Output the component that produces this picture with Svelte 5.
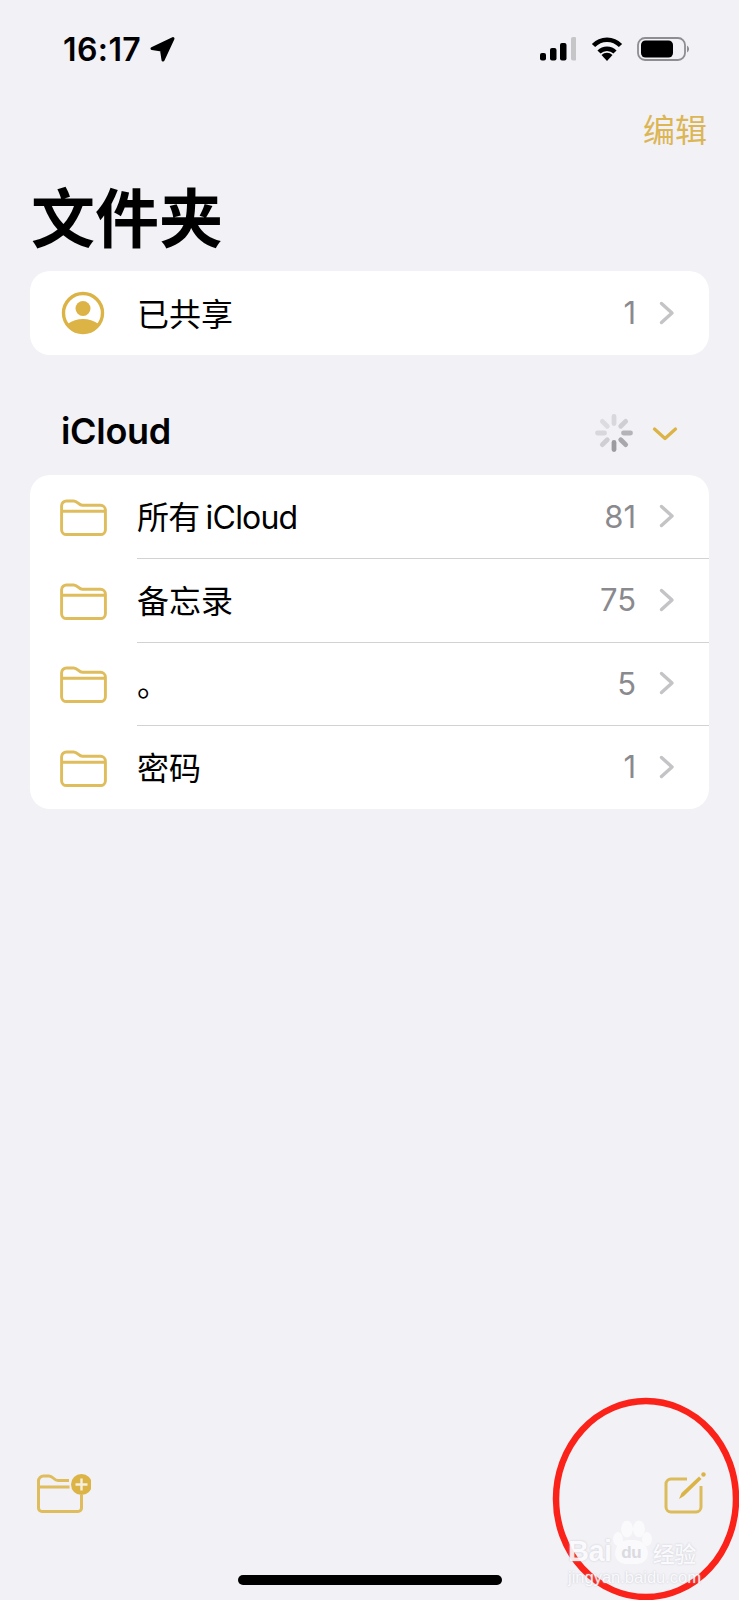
<script lang="ts">
  const folders = [
    { name: '所有 iCloud', count: 81 },
    { name: '备忘录', count: 75 },
    { name: '。', count: 5 },
    { name: '密码', count: 1 }
  ];
  // spinner spokes, clockwise from 12 o'clock
  const spokes = [
    { a: 0, o: '#d8d8dc' },
    { a: 45, o: '#cfcfd3' },
    { a: 90, o: '#b4b4b8' },
    { a: 135, o: '#a8a8ac' },
    { a: 180, o: '#9c9ca0' },
    { a: 225, o: '#cfcfd3' },
    { a: 270, o: '#d8d8dc' },
    { a: 315, o: '#dcdce0' }
  ];
</script>

<div class="page">
  <header class="status">
    <div class="time">
      <span>16:17</span>
      <svg width="25" height="26" viewBox="0 0 25 26"><path d="M23 2.500 2 12.500 11.500 14 13 24Z" fill="#000" stroke="#000" stroke-width="3" stroke-linejoin="round"/></svg>
    </div>
    <div class="indicators">
      <svg class="signal" width="36" height="24" viewBox="0 0 36 24">
        <rect x="0" y="16" width="6" height="7.500" rx="2" fill="#000"/>
        <rect x="10" y="11" width="6.500" height="12.500" rx="2" fill="#000"/>
        <rect x="20" y="6" width="6.500" height="17.500" rx="2" fill="#000"/>
        <rect x="31" y="0" width="5.500" height="23.500" rx="2" fill="#c6c6c8"/>
      </svg>
      <svg width="32" height="24" viewBox="0 0 32 24">
        <path d="M2.500 8.500A18.500 18.500 0 0 1 29.500 8.500M8 15A11.500 11.500 0 0 1 24 15" fill="none" stroke="#000" stroke-width="4.500"/>
        <path d="M16 24 10.500 18A8 8 0 0 1 21.500 18Z" fill="#000"/>
      </svg>
      <svg width="52" height="24" viewBox="0 0 52 24">
        <rect x="1" y="1" width="47" height="22" rx="7" fill="none" stroke="#8e8e92" stroke-width="1.800"/>
        <rect x="4" y="3.500" width="32" height="17" rx="4.500" fill="#000"/>
        <path d="M50 8.500a4 4 0 0 1 0 7Z" fill="#909094"/>
      </svg>
    </div>
  </header>

  <nav class="nav"><span class="edit">编辑</span></nav>
  <h1>文件夹</h1>

  <section class="card">
    <div class="row">
      <span class="icon person">
        <svg width="44" height="44" viewBox="0 0 44 44">
          <defs><clipPath id="disc"><circle cx="22" cy="22" r="20"/></clipPath></defs>
          <circle cx="22" cy="22" r="19.500" fill="none" stroke="#dcb345" stroke-width="3.400"/>
          <circle cx="22" cy="17.500" r="7.500" fill="#dcb345"/>
          <ellipse cx="22" cy="43" rx="21" ry="15" fill="#dcb345" clip-path="url(#disc)"/>
        </svg>
      </span>
      <span class="name">已共享</span>
      <span class="count">1</span>
      <svg class="chev" width="16" height="24" viewBox="0 0 16 24"><path d="M2.500 2.500 13 12 2.500 21.500" fill="none" stroke="#c4c4c7" stroke-width="3.400" stroke-linecap="round" stroke-linejoin="round"/></svg>
    </div>
  </section>

  <div class="section-head">
    <h2>iCloud</h2>
    <svg width="40" height="40" viewBox="-20 -20 40 40">
      {#each spokes as s}
        <line x1="0" y1="-9.500" x2="0" y2="-16.500" stroke={s.o} stroke-width="4.800" stroke-linecap="round" transform="rotate({s.a})"/>
      {/each}
    </svg>
    <svg class="down" width="26" height="16" viewBox="0 0 26 16"><path d="M2.500 3 13 12.500 23.500 3" fill="none" stroke="#dcb345" stroke-width="3.200" stroke-linecap="round" stroke-linejoin="round"/></svg>
  </div>

  <section class="card">
    {#each folders as f, i}
      <div class="row" class:sep={i > 0}>
        <span class="icon">
          <svg class="folder" width="47" height="37" viewBox="0 0 48 38">
            <path d="M1.500 7a5 5 0 0 1 5-5h7.500c4 0 5 4.500 9 4.500h18.500a5 5 0 0 1 5 5v20a5 5 0 0 1-5 5h-35a5 5 0 0 1-5-5ZM1.500 12.500h45" fill="none" stroke="#dfbc5c" stroke-width="3"/>
          </svg>
        </span>
        <span class="name" class:latin={/[a-z]/i.test(f.name)}>{f.name}</span>
        <span class="count">{f.count}</span>
        <svg class="chev" width="16" height="24" viewBox="0 0 16 24"><path d="M2.500 2.500 13 12 2.500 21.500" fill="none" stroke="#c4c4c7" stroke-width="3.400" stroke-linecap="round" stroke-linejoin="round"/></svg>
      </div>
    {/each}
  </section>

  <footer class="toolbar">
    <svg width="54" height="40" viewBox="0 0 54 40">
      <path d="M1.500 8a5 5 0 0 1 5-5h5.500c4 0 5 4.500 9 4.500h11M1.500 14h31M1.500 8v27a3.500 3.500 0 0 0 3.500 3.500h36a3.500 3.500 0 0 0 3.500-3.500v-13" fill="none" stroke="#dfbc5c" stroke-width="3"/>
      <circle cx="44.500" cy="11.500" r="10.500" fill="#dcb345"/>
      <path d="M44.500 5.500v12M38.500 11.500h12" stroke="#f5f0e0" stroke-width="2.400"/>
    </svg>
    <svg class="compose" width="42" height="42" viewBox="0 0 42 42">
      <path d="M23 7H7a5 5 0 0 0-5 5v23a5 5 0 0 0 5 5h25a5 5 0 0 0 5-5V14" fill="none" stroke="#dcbb5a" stroke-width="3"/>
      <path d="M15 27 17.500 21 35 4.500 37.500 7 20 24Z" fill="#dcb345"/>
      <circle cx="39.500" cy="2.500" r="2.200" fill="#dcb345"/>
    </svg>
  </footer>

  <div class="home"></div>

  <!-- annotation + watermark sit on top of the screenshot -->
  <svg class="ring" width="190" height="210" viewBox="0 0 190 210">
    <ellipse cx="94" cy="104" rx="90" ry="98" fill="none" stroke="#fb2219" stroke-width="6.500"/>
  </svg>
  <div class="mark">
    <svg class="paw" width="50" height="30" viewBox="0 0 50 30">
      <ellipse cx="9" cy="19" rx="5" ry="7" fill="#fbfbfd"/>
      <ellipse cx="18" cy="9" rx="6" ry="8.500" fill="#fbfbfd"/>
      <ellipse cx="30" cy="9" rx="6" ry="8.500" fill="#fbfbfd"/>
      <ellipse cx="38" cy="19" rx="5" ry="7" fill="#fbfbfd"/>
    </svg>
    <div class="mark-top">
      <span>Bai</span>
      <span class="du">du</span>
      <span class="jy">经验</span>
    </div>
    <div class="mark-url">jingyan.baidu.com</div>
  </div>
</div>

<style>
  :global(body) {
    margin: 0;
    background: #f1f1f6;
  }
  .page {
    position: relative;
    width: 739px;
    height: 1600px;
    overflow: hidden;
    display: flex;
    flex-direction: column;
    background: #f1f1f6;
    color: #000;
    font-family: Inter, "Noto Sans CJK SC", sans-serif;
  }
  .status {
    display: flex;
    justify-content: space-between;
    align-items: center;
    height: 26px;
    padding: 36px 50px 0 63px;
  }
  .time {
    display: flex;
    align-items: center;
    gap: 9px;
    font-size: 32px;
    font-weight: 600;
    letter-spacing: 0.4px;
  }
  .indicators {
    display: flex;
    align-items: center;
    gap: 14px;
  }
  .signal {
    margin-right: 1px;
  }
  .nav {
    display: flex;
    justify-content: flex-end;
    padding: 49px 32px 0 0;
    height: 40px;
  }
  .edit {
    font-size: 32px;
    line-height: 40px;
    color: #dcb654;
  }
  h1 {
    margin: 31px 0 0 31px;
    font-size: 64px;
    line-height: 74px;
    font-weight: 700;
  }
  .card {
    margin: 0 30px;
    background: #fff;
    border-radius: 20px;
  }
  h1 + .card {
    margin-top: 15px;
  }
  .row {
    display: flex;
    align-items: center;
    position: relative;
    height: 83.5px;
  }
  .row.sep::before {
    content: "";
    position: absolute;
    left: 107px;
    right: 0;
    top: 0;
    height: 1px;
    background: #d2d2d5;
  }
  .icon {
    width: 107px;
    padding-left: 30px;
    box-sizing: border-box;
    display: flex;
    flex: none;
  }
  .person {
    padding-left: 31px;
  }
  .folder {
    margin-top: 3px;
  }
  .name {
    flex: 1;
    font-size: 32px;
    white-space: nowrap;
    padding-bottom: 2px;
  }
  .name.latin {
    letter-spacing: -0.8px;
    word-spacing: -2px;
  }
  .count {
    font-size: 31px;
    color: #8a8a8e;
    margin-right: 23px;
  }
  .chev {
    margin-right: 34px;
  }
  .section-head {
    display: flex;
    align-items: center;
    height: 120px;
    box-sizing: border-box;
    padding: 36px 61px 0 61px;
  }
  h2 {
    flex: 1;
    margin: 0 0 4px;
    font-size: 36px;
    font-weight: 600;
    letter-spacing: -0.3px;
  }
  .down {
    margin-left: 18px;
    margin-top: 2px;
  }
  .toolbar {
    margin-top: auto;
    display: flex;
    justify-content: space-between;
    align-items: flex-end;
    padding: 0 33px 0 37px;
    margin-bottom: 87px;
  }
  .compose {
    margin-bottom: -1px;
  }
  .home {
    position: absolute;
    left: 238px;
    top: 1575px;
    width: 264px;
    height: 10px;
    border-radius: 5px;
    background: #000;
  }
  .ring {
    position: absolute;
    left: 552px;
    top: 1395px;
  }
  .mark {
    position: absolute;
    left: 568px;
    top: 1540px;
    width: 135px;
    color: #fbfbfd;
    opacity: 0.9;
    text-shadow: 0 0 2px #c4c4cc;
  }
  .paw {
    position: absolute;
    left: 41px;
    top: -20px;
  }
  .mark-top {
    display: flex;
    align-items: center;
    height: 23px;
    font-family: "Liberation Sans", sans-serif;
    font-size: 29px;
    font-weight: 700;
    letter-spacing: -0.5px;
    white-space: nowrap;
  }
  .du {
    position: relative;
    width: 33px;
    height: 24px;
    margin-left: 3px;
    border-radius: 14px 14px 11px 11px;
    background: #fbfbfd;
    color: #d8d8de;
    font-size: 17px;
    line-height: 25px;
    text-align: center;
    text-shadow: none;
  }
  .jy {
    font-family: "Noto Sans CJK SC", sans-serif;
    font-size: 22px;
    font-weight: 500;
    margin-left: 5px;
  }
  .mark-url {
    margin-top: 4px;
    font-family: "Liberation Sans", sans-serif;
    font-size: 16.5px;
    line-height: 20px;
    white-space: nowrap;
  }
</style>
